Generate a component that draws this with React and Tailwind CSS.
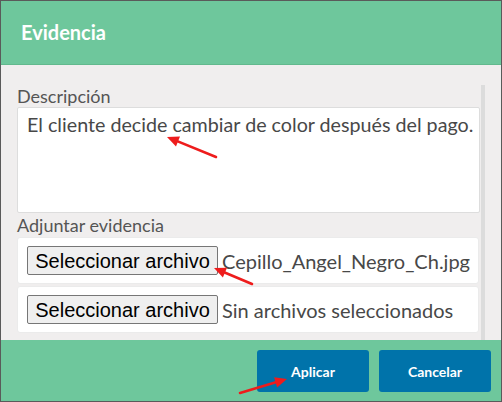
import React from 'react'

const lato = { fontFamily: 'Lato, "Open Sans", sans-serif' }

function FileRow({ fileName }) {
  return (
    <div className="h-[47px] bg-white rounded-[3px] border border-[#ebebeb] flex items-center pl-[9px]">
      <button
        type="button"
        className="h-[29px] w-[191px] bg-[#efefef] border border-[#767676] rounded-[2px] text-[20px] text-black leading-none whitespace-nowrap"
        style={{ fontFamily: '"Liberation Sans", Arial, sans-serif' }}
      >
        Seleccionar archivo
      </button>
      <span className="ml-[4px] text-[20px] text-[#484848] whitespace-nowrap">{fileName}</span>
    </div>
  )
}

function Arrows() {
  const arrows = [
    { x1: 215, y1: 156, x2: 166, y2: 136 },
    { x1: 251, y1: 283, x2: 213, y2: 267 },
    { x1: 239, y1: 392, x2: 286, y2: 378 },
  ]
  return (
    <svg className="absolute inset-0 pointer-events-none" width="502" height="402">
      {arrows.map((a, i) => {
        const ang = Math.atan2(a.y2 - a.y1, a.x2 - a.x1)
        const len = 13
        const w = 0.42
        const p1 = [a.x2 - len * Math.cos(ang - w), a.y2 - len * Math.sin(ang - w)]
        const p2 = [a.x2 - len * Math.cos(ang + w), a.y2 - len * Math.sin(ang + w)]
        const bx = a.x2 - 9 * Math.cos(ang)
        const by = a.y2 - 9 * Math.sin(ang)
        return (
          <g key={i}>
            <line x1={a.x1} y1={a.y1} x2={bx} y2={by} stroke="#ee1c1c" strokeWidth="2.6" strokeLinecap="round" />
            <polygon points={`${a.x2},${a.y2} ${p1[0]},${p1[1]} ${p2[0]},${p2[1]}`} fill="#ee1c1c" />
          </g>
        )
      })}
    </svg>
  )
}

export default function App() {
  return (
    <div
      className="relative w-[502px] h-[402px] border border-[#5a5a5a] flex flex-col overflow-hidden"
      style={lato}
    >
      {/* Header */}
      <header className="h-[64px] shrink-0 bg-[#6ec79c] border-b border-[#62b98d] flex items-center pl-[20px]">
        <h2 className="text-[20px] font-bold text-white pb-[1px]">Evidencia</h2>
      </header>

      {/* Body */}
      <div className="flex-1 bg-[#f0eeee] pl-[16px] pr-[16px] pt-[20px]">
        <div className="h-full border-r-4 border-[#dcdcdc] pr-[1px] flex flex-col">
          <label className="text-[18px] leading-[22px] text-[#555]">Descripción</label>
          <div className="h-[106px] bg-white border border-[#dddddd] rounded-[2px] px-[9px] pt-[5px] text-[19.7px] text-[#484848] leading-[24px] whitespace-nowrap">
            El cliente decide cambiar de color después del pago.
          </div>
          <label className="mt-[1px] text-[18px] leading-[22px] text-[#555]">Adjuntar evidencia</label>
          <div className="mt-[1px] flex flex-col gap-[2px] pr-[1px]">
            <FileRow fileName="Cepillo_Angel_Negro_Ch.jpg" />
            <FileRow fileName="Sin archivos seleccionados" />
          </div>
        </div>
      </div>

      {/* Footer */}
      <footer className="h-[61px] shrink-0 bg-[#6ec79c] flex items-center justify-end gap-[10px] pr-[10px] pt-[1px]">
        <button className="w-[112px] h-[42px] rounded-[3px] bg-[#0073aa] text-white text-[14px] font-bold">
          Aplicar
        </button>
        <button className="w-[112px] h-[42px] rounded-[3px] bg-[#0073aa] text-white text-[14px] font-bold">
          Cancelar
        </button>
      </footer>

      <Arrows />
    </div>
  )
}
